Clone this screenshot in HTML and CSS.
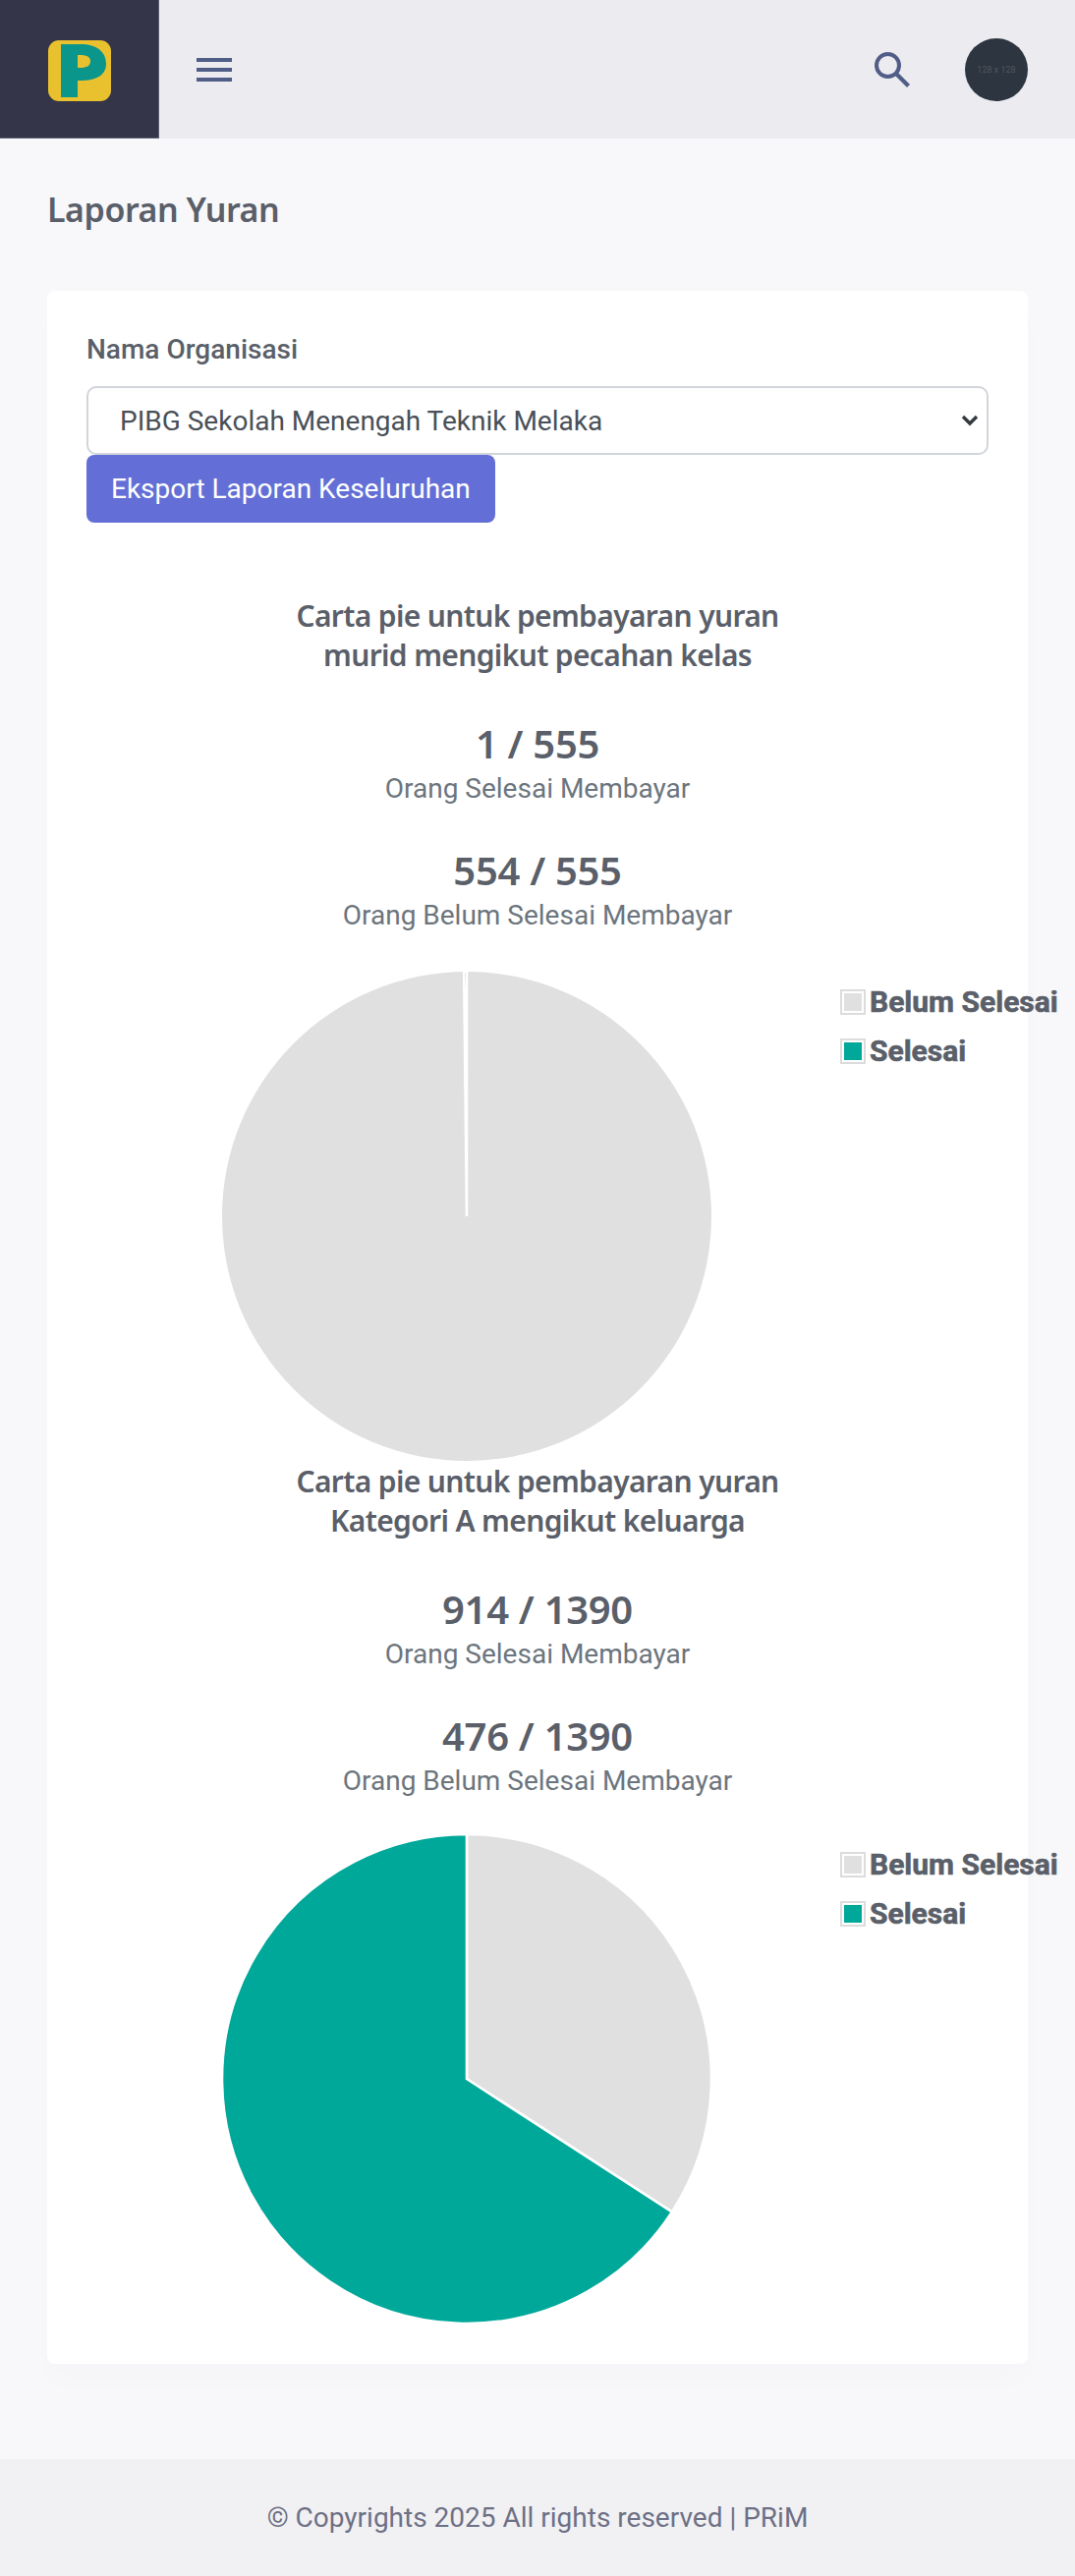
FILE: index.html
```html
<!DOCTYPE html>
<html lang="en">
<head>
    <meta charset="UTF-8">
    <meta name="viewport" content="width=device-width, initial-scale=1.0">
    <title>Laporan Yuran</title>
    <link rel="stylesheet" href="styles.css">
</head>
<body>
    <header class="topbar">
        <div class="logo-box">
            <svg class="logo" viewBox="0 0 64 62" width="64" height="62">
                <rect width="64" height="62" rx="11" fill="#e9c12e"/>
                <path fill="#0b968c" fill-rule="evenodd" d="M13 4H33C50 4 59 12 59 24C59 36 48 41 33 41H30V58H13ZM30 15V28H33C39 28 43 26 43 21C43 17 39 15 33 15Z"/>
            </svg>
        </div>
        <button class="menu-btn" aria-label="Menu">
            <span></span><span></span><span></span>
        </button>
        <div class="topbar-right">
            <svg class="search-icon" viewBox="0 0 36 36" width="36" height="36">
                <circle cx="13.5" cy="13.5" r="11.5" fill="none" stroke="#4f5d87" stroke-width="4"/>
                <path d="M21.5 21.5L34.5 34.5" stroke="#4f5d87" stroke-width="4.2" fill="none"/>
            </svg>
            <div class="avatar">128 x 128</div>
        </div>
    </header>

    <main class="content">
        <h1 class="page-title">Laporan Yuran</h1>

        <section class="card">
            <label class="field-label" for="org">Nama Organisasi</label>
            <select id="org" class="org-select">
                <option>PIBG Sekolah Menengah Teknik Melaka</option>
            </select>
            <button class="export-btn">Eksport Laporan Keseluruhan</button>

            <!-- Murid -->
            <div class="report first">
                <h2 class="report-title">Carta pie untuk pembayaran yuran<br>murid mengikut pecahan kelas</h2>
                <div class="stat">
                    <strong>1 / 555</strong>
                    <span>Orang Selesai Membayar</span>
                </div>
                <div class="stat">
                    <strong>554 / 555</strong>
                    <span>Orang Belum Selesai Membayar</span>
                </div>
                <div class="chart">
                    <svg class="pie" viewBox="0 0 500 500" width="500" height="500">
                        <circle cx="250" cy="250" r="249" fill="#e0e0e0"/>
                        <path d="M250 250L247.2 1A249 249 0 0 1 250 1Z" fill="#00a89a" stroke="#fff" stroke-width="2.6"/>
                    </svg>
                    <ul class="legend">
                        <li><i class="swatch grey"></i>Belum Selesai</li>
                        <li><i class="swatch teal"></i>Selesai</li>
                    </ul>
                </div>
            </div>

            <!-- Kategori A -->
            <div class="report">
                <h2 class="report-title">Carta pie untuk pembayaran yuran<br>Kategori A mengikut keluarga</h2>
                <div class="stat">
                    <strong>914 / 1390</strong>
                    <span>Orang Selesai Membayar</span>
                </div>
                <div class="stat">
                    <strong>476 / 1390</strong>
                    <span>Orang Belum Selesai Membayar</span>
                </div>
                <div class="chart">
                    <svg class="pie" viewBox="0 0 500 500" width="500" height="500">
                        <path d="M250 250L250 1A249 249 0 0 1 458.9 385.5Z" fill="#e0e0e0" stroke="#fff" stroke-width="2.6"/>
                        <path d="M250 250L458.9 385.5A249 249 0 1 1 250 1Z" fill="#00a89a" stroke="#fff" stroke-width="2.6"/>
                    </svg>
                    <ul class="legend">
                        <li><i class="swatch grey"></i>Belum Selesai</li>
                        <li><i class="swatch teal"></i>Selesai</li>
                    </ul>
                </div>
            </div>
        </section>
    </main>

    <footer class="footer">© Copyrights 2025 All rights reserved | PRiM</footer>
</body>
</html>
```

FILE: styles.css
```css
* {
    box-sizing: border-box;
}

body {
    margin: 0;
    background-color: #f8f8fb;
    color: #5a5f69;
    font-family: Roboto, sans-serif;
    overflow-x: hidden;
}

.topbar {
    display: flex;
    align-items: center;
    height: 141px;
    background-color: #ecebf0;
}

.logo-box {
    display: flex;
    align-items: center;
    justify-content: center;
    width: 162px;
    height: 141px;
    padding-top: 4px;
    background-color: #343548;
    border-right: 1px solid #5d5e6e;
    border-bottom: 1px solid #5d5e6e;
}

.menu-btn {
    display: flex;
    flex-direction: column;
    gap: 6px;
    width: 36px;
    margin-left: 38px;
    padding: 0;
    background: none;
    border: none;
}

.menu-btn span {
    height: 4px;
    background-color: #4f5d87;
}

.topbar-right {
    display: flex;
    align-items: center;
    gap: 56px;
    margin-left: auto;
    margin-right: 48px;
}

.avatar {
    display: flex;
    align-items: center;
    justify-content: center;
    width: 64px;
    height: 64px;
    border-radius: 50%;
    background-color: #2d3540;
    color: #4d555f;
    font-size: 9px;
}

.content {
    padding: 0 48px 97px;
}

.page-title {
    margin: 0;
    padding: 50px 0 60px;
    font-family: "Noto Sans", sans-serif;
    font-size: 34px;
    font-weight: 600;
    letter-spacing: -0.45px;
    line-height: 45px;
    color: #5a5f69;
}

.card {
    padding: 40px;
    background-color: #fff;
    border-radius: 8px;
    box-shadow: 0 20px 27px rgba(0, 0, 0, 0.01);
}

.field-label {
    display: block;
    margin-bottom: 17px;
    font-size: 28px;
    font-weight: 500;
    line-height: 40px;
}

.org-select {
    display: block;
    width: 100%;
    height: 70px;
    padding: 0 48px 0 32px;
    appearance: none;
    background-color: #fff;
    background-image: url("data:image/svg+xml,%3Csvg xmlns='http://www.w3.org/2000/svg' viewBox='0 0 18 12'%3E%3Cpath d='M2 2l7 7 7-7' fill='none' stroke='%23343a40' stroke-width='3.4'/%3E%3C/svg%3E");
    background-repeat: no-repeat;
    background-position: right 8px center;
    background-size: 18px 12px;
    border: 2px solid #d1d5db;
    border-radius: 10px;
    color: #495057;
    font-family: Roboto, sans-serif;
    font-size: 28px;
}

.export-btn {
    display: block;
    height: 69px;
    padding: 0 25px;
    background-color: #636fd6;
    border: none;
    border-radius: 8px;
    color: #fff;
    font-family: Roboto, sans-serif;
    font-size: 28px;
}

.report {
    text-align: center;
}

.report.first {
    padding-top: 75px;
}

.report-title {
    margin: 0 0 45px;
    font-family: "Noto Sans", sans-serif;
    font-size: 30px;
    font-weight: 600;
    letter-spacing: -0.65px;
    line-height: 40px;
}

.stat {
    margin-top: 38px;
}

.report-title + .stat {
    margin-top: 30px;
}

.stat strong {
    display: block;
    font-family: "Noto Sans", sans-serif;
    font-size: 40px;
    font-weight: 600;
    letter-spacing: -0.3px;
    line-height: 50px;
}

.stat span {
    display: block;
    color: #6c757d;
    font-size: 28px;
    line-height: 41px;
}

.chart {
    position: relative;
    margin-top: 36px;
    height: 500px;
}

.report + .report .chart {
    margin-top: 33px;
}

.pie {
    display: block;
    margin-left: 137px;
}

.legend {
    position: absolute;
    top: 7px;
    left: 767px;
    width: 240px;
    margin: 0;
    padding: 0;
    list-style: none;
    text-align: left;
    font-size: 30px;
    font-weight: 700;
    line-height: 50px;
    white-space: nowrap;
    -webkit-text-stroke: 0.6px #5a5f69;
}

.legend li {
    display: flex;
    align-items: center;
}

.swatch {
    width: 26px;
    height: 26px;
    margin-right: 4px;
    padding: 2px;
    background-clip: content-box;
    border: 2px solid #dcdcdc;
}

.swatch.grey {
    background-color: #e0e0e0;
}

.swatch.teal {
    background-color: #00a89a;
}

.footer {
    height: 119px;
    background-color: #f1f1f3;
    color: #6e7085;
    font-size: 28px;
    line-height: 119px;
    text-align: center;
}
```
